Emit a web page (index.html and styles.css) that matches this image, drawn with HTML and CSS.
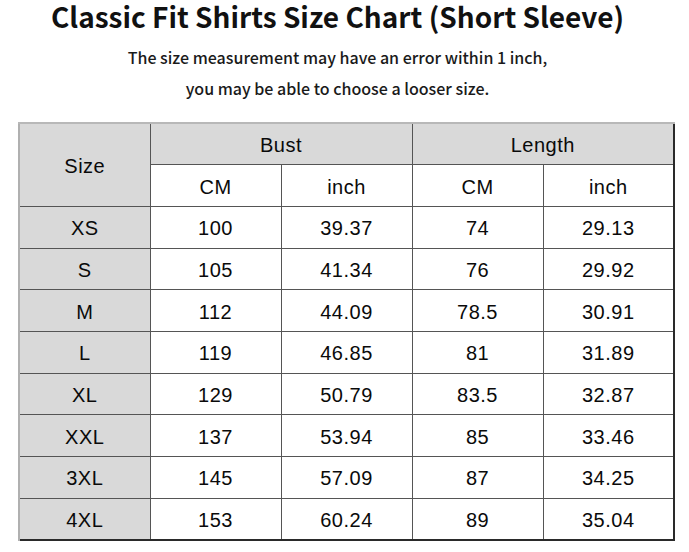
FILE: index.html
```html
<!DOCTYPE html>
<html>
<head>
<meta charset="utf-8">
<link rel="stylesheet" href="styles.css">
</head>
<body>
<div class="page">
  <h1 class="title">Classic Fit Shirts Size Chart (Short Sleeve)</h1>
  <p class="note">The size measurement may have an error within 1 inch,</p>
  <p class="note note2">you may be able to choose a looser size.</p>
  <table class="chart">
    <colgroup>
      <col class="c"><col class="c"><col class="c"><col class="c"><col class="c">
    </colgroup>
    <tr class="hrow">
      <th class="gray" rowspan="2">Size</th>
      <th class="gray" colspan="2">Bust</th>
      <th class="gray" colspan="2">Length</th>
    </tr>
    <tr>
      <td>CM</td><td>inch</td><td>CM</td><td>inch</td>
    </tr>
    <tr><th class="gray">XS</th><td>100</td><td>39.37</td><td>74</td><td>29.13</td></tr>
    <tr><th class="gray">S</th><td>105</td><td>41.34</td><td>76</td><td>29.92</td></tr>
    <tr><th class="gray">M</th><td>112</td><td>44.09</td><td>78.5</td><td>30.91</td></tr>
    <tr><th class="gray">L</th><td>119</td><td>46.85</td><td>81</td><td>31.89</td></tr>
    <tr><th class="gray">XL</th><td>129</td><td>50.79</td><td>83.5</td><td>32.87</td></tr>
    <tr><th class="gray">XXL</th><td>137</td><td>53.94</td><td>85</td><td>33.46</td></tr>
    <tr><th class="gray">3XL</th><td>145</td><td>57.09</td><td>87</td><td>34.25</td></tr>
    <tr><th class="gray">4XL</th><td>153</td><td>60.24</td><td>89</td><td>35.04</td></tr>
  </table>
</div>
</body>
</html>
```

FILE: styles.css
```css
html, body {
  margin: 0;
  padding: 0;
  background: #ffffff;
}

.page {
  width: 675px;
  height: 552px;
  overflow: hidden;
  padding-top: 1px;
}

.title {
  margin: 0;
  font-family: "Noto Sans CJK SC", "Noto Sans", sans-serif;
  font-weight: 700;
  font-size: 28px;
  line-height: 30px;
  text-align: center;
  color: #111111;
}

.note {
  margin: 16px 0 0;
  font-family: "Noto Sans CJK SC", "Noto Sans", sans-serif;
  font-weight: 500;
  font-size: 16px;
  line-height: 20px;
  text-align: center;
  color: #1a1a1a;
}

.note2 {
  margin-top: 11px;
}

.chart {
  margin: 24px 0 0 18px;
  border-collapse: collapse;
  table-layout: fixed;
  width: 655px;
  border-top: 2px solid #b8b8b8;
  border-left: 2px solid #b0b0b0;
  border-right: 2px solid #2a2a2a;
  border-bottom: 2px solid #2a2a2a;
}

.c {
  width: 131px;
}

.chart tr {
  height: 41.7px;
}

.chart th,
.chart td {
  padding: 3px 0 0;
  border: 1px solid #555555;
  font-family: "Liberation Sans", Arial, sans-serif;
  font-weight: 400;
  font-size: 20px;
  letter-spacing: 0.5px;
  text-align: center;
  vertical-align: middle;
  color: #0a0a0a;
}

.chart .gray {
  background: #d9d9d9;
}

.chart tr:first-child th {
  border-top: 2px solid #b8b8b8;
}

.chart tr th:first-child {
  border-left: 2px solid #b0b0b0;
}
```
